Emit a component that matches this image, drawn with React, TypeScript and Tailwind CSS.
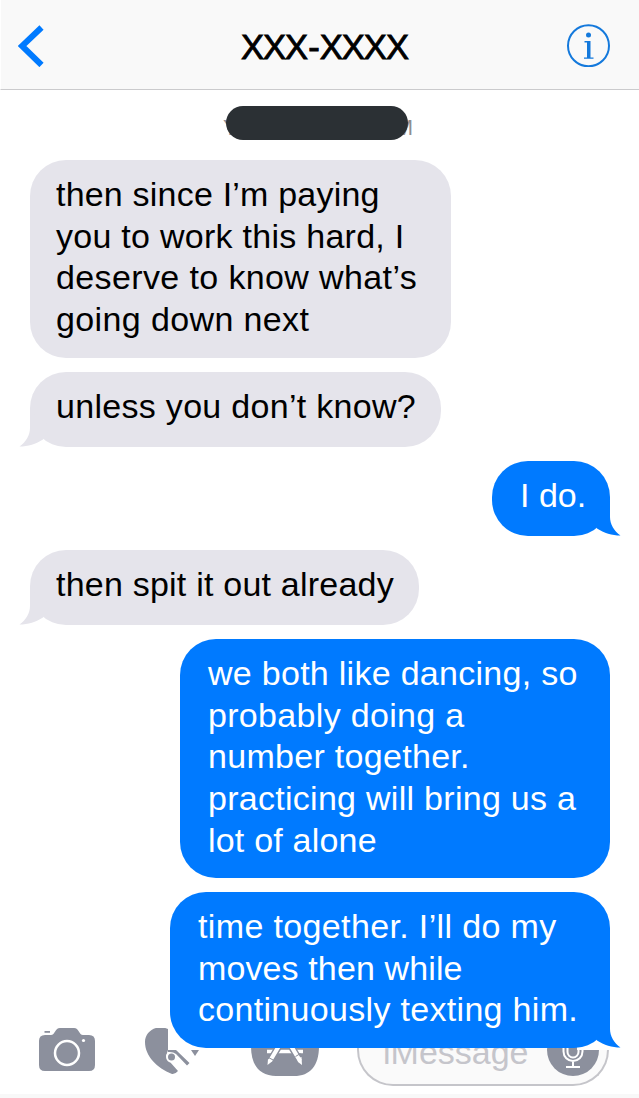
type Message = {
  lines: { text: string; className?: string }[];
  sent?: boolean;
  tail?: boolean;
  size: string;
};

const messages: Message[] = [
  {
    size: "w-[421px] h-[198px]",
    lines: [
      { text: "then since I’m paying", className: "tracking-[0.2px]" },
      { text: "you to work this hard, I", className: "tracking-[0.27px]" },
      { text: "deserve to know what’s", className: "tracking-[0.38px]" },
      { text: "going down next", className: "tracking-[0.38px]" },
    ],
  },
  { size: "w-[411px] h-[75px]", tail: true, lines: [{ text: "unless you don’t know?", className: "tracking-[0.3px]" }] },
  { size: "w-[118px] h-[75px]", sent: true, tail: true, lines: [{ text: "I do." }] },
  { size: "w-[389px] h-[75px]", tail: true, lines: [{ text: "then spit it out already", className: "tracking-[0.22px]" }] },
  {
    size: "w-[430px] h-[239px]",
    sent: true,
    lines: [
      { text: "we both like dancing, so", className: "tracking-[0.28px]" },
      { text: "probably doing a", className: "tracking-[0.32px]" },
      { text: "number together.", className: "tracking-[0.3px]" },
      { text: "practicing will bring us a", className: "tracking-[0.28px]" },
      { text: "lot of alone", className: "tracking-[0.2px]" },
    ],
  },
  {
    size: "w-[440px] h-[156px]",
    sent: true,
    tail: true,
    lines: [
      { text: "time together. I’ll do my", className: "tracking-[0.36px]" },
      { text: "moves then while", className: "tracking-[0.12px]" },
      { text: "continuously texting him.", className: "tracking-[0.31px]" },
    ],
  },
];

const Tail = ({ sent }: { sent?: boolean }) => (
  <svg
    className={sent ? "absolute -right-[11px] bottom-0 -scale-x-100 text-[#007aff]" : "absolute -left-[11px] bottom-0 text-[#e5e4eb]"}
    width="40"
    height="40"
    viewBox="0 0 40 40"
    fill="currentColor"
  >
    <path d="M11 4V21C11 28 7 35 0.500 39.5C9 39.5 17 37 24 32.5L32 20Z" />
  </svg>
);

const Bubble = ({ message }: { message: Message }) => (
  <div
    className={`relative shrink-0 rounded-[36px] pt-[14px] ${message.size} ${
      message.sent ? "self-end bg-[#007aff] pl-[28px] text-white" : "self-start bg-[#e5e4eb] pl-[26px] text-black"
    }`}
  >
    {message.tail && <Tail sent={message.sent} />}
    {message.lines.map((line) => (
      <p key={line.text} className={`relative whitespace-nowrap text-[34px] leading-[41.7px] ${line.className ?? ""}`}>
        {line.text}
      </p>
    ))}
  </div>
);

const Header = () => (
  <header className="flex h-[90px] shrink-0 items-center justify-between border-b border-l border-b-[#cbcbcd] border-l-white bg-[#f9f9f9] pl-[17px] pr-[28px]">
    <svg width="44" height="44" viewBox="0 0 44 44" fill="none" stroke="#007aff" strokeWidth="6">
      <path d="M23.5 4.5L4 23L23.5 42" />
    </svg>
    <h1 className="ml-[20px] pt-[5px] text-[34.5px] leading-[40px] tracking-[-0.95px] [-webkit-text-stroke:0.9px_black]">
      XXX<span className="mx-[1px]">-</span>XXXX
    </h1>
    <svg width="44" height="44" viewBox="0 0 44 44" fill="#1479dc">
      <circle cx="21.5" cy="22.8" r="20.5" fill="none" stroke="#1479dc" strokeWidth="2" />
      <circle cx="21.5" cy="12" r="2.5" />
      <path d="M17.500 18H23.500V34.500H26.500V35.700H17V34.500H20V19.500H17.500Z" />
    </svg>
  </header>
);

const Timestamp = () => (
  <div className="relative mb-[6px] ml-[193px] flex h-[34px] w-[190px] shrink-0 items-end justify-between text-[22px] leading-[24px] text-[#8e8e93]">
    <span>Y</span>
    <span>M</span>
    <div className="absolute left-[3px] top-0 h-[34px] w-[182px] rounded-full bg-[#2b3034]" />
  </div>
);

const Footer = () => (
  <footer className="flex h-[70px] shrink-0 border-b-4 border-[#f8f8f8]">
    <svg className="shrink-0" width="350" height="66" viewBox="0 1028 350 66" fill="#8c909d">
      <path d="M45 1035H51C55 1035 55 1028 60 1028H74C79 1028 79 1035 83 1035H89Q95 1035 95 1041V1065Q95 1071 89 1071H45Q39 1071 39 1065V1041Q39 1035 45 1035Z" />
      <path d="M44.500 1031H50V1032.800H44.500Z" />
      <circle cx="67" cy="1053" r="12" fill="none" stroke="white" strokeWidth="2.500" />
      <circle cx="83.500" cy="1040.500" r="1.600" fill="white" />

      {/* digital touch */}
      <path d="M168 1029C157 1024 145 1031 145 1042C145 1056 157 1068 172 1074Q175 1074.500 178 1071L170 1062L166 1056L168 1050Z" />
      <circle cx="171.500" cy="1057" r="5.500" fill="white" />
      <path d="M168 1050H176L189.500 1063L187 1065.500L176 1054Q173 1051.500 168 1052Z" />
      <circle cx="171.500" cy="1057" r="3.500" />
      <path d="M191 1050H199L195 1056Z" />

      {/* app drawer */}
      <path d="M251 1028H319V1046C319 1066 310 1076 294 1076H276C260 1076 251 1066 251 1046Z" />
      <path d="M267 1051.500H303" stroke="white" strokeWidth="3.500" />
      <path d="M279 1046L269.500 1062M291 1046L300.500 1062" stroke="#8c909d" strokeWidth="7" />
      <path d="M279.500 1045L270 1061M290.500 1045L300 1061" stroke="white" strokeWidth="4.200" />
      <path d="M268 1059L272 1061.500L267.500 1065ZM297.500 1058.500L301.500 1057L302 1065L298 1062Z" fill="white" />
      <path d="M268.500 1057.500L274 1060.500M295.500 1056.500L300.500 1053.500" stroke="#8c909d" strokeWidth="1" />
    </svg>
    <div className="relative ml-[7px] flex h-[58px] w-[252px] items-start justify-between rounded-b-[36px] border-2 border-t-0 border-[#c5c5ca] bg-[#fafafa] pl-[24px] pr-[8px]">
      <span className="pt-[4px] text-[34px] leading-[40px] text-[#c5c5cb]">iMessage</span>
      <svg width="52" height="48" viewBox="547 1028 52 48" fill="none" stroke="white" strokeWidth="2">
        <circle cx="573" cy="1050" r="26" fill="#8c909d" stroke="none" />
        <rect x="567.5" y="1036" width="11" height="21.5" rx="5.5" />
        <path d="M563.500 1048V1051.500A9.500 9.500 0 0 0 582.500 1051.500V1048M573 1061V1067M566 1067H580" />
      </svg>
      <div className="absolute -right-[2px] top-0 h-[22px] w-[32px] bg-white" />
    </div>
  </footer>
);

const App = () => (
  <div className="flex h-[1098px] w-[639px] flex-col overflow-hidden bg-white font-['Liberation_Sans',Arial,sans-serif]">
    <Header />
    <main className="relative z-10 flex h-[938px] shrink-0 flex-col gap-[14px] pl-[30px] pr-[29px] pt-[16px]">
      <Timestamp />
      {messages.map((message) => (
        <Bubble key={message.lines[0].text} message={message} />
      ))}
    </main>
    <Footer />
  </div>
);

export default App;
